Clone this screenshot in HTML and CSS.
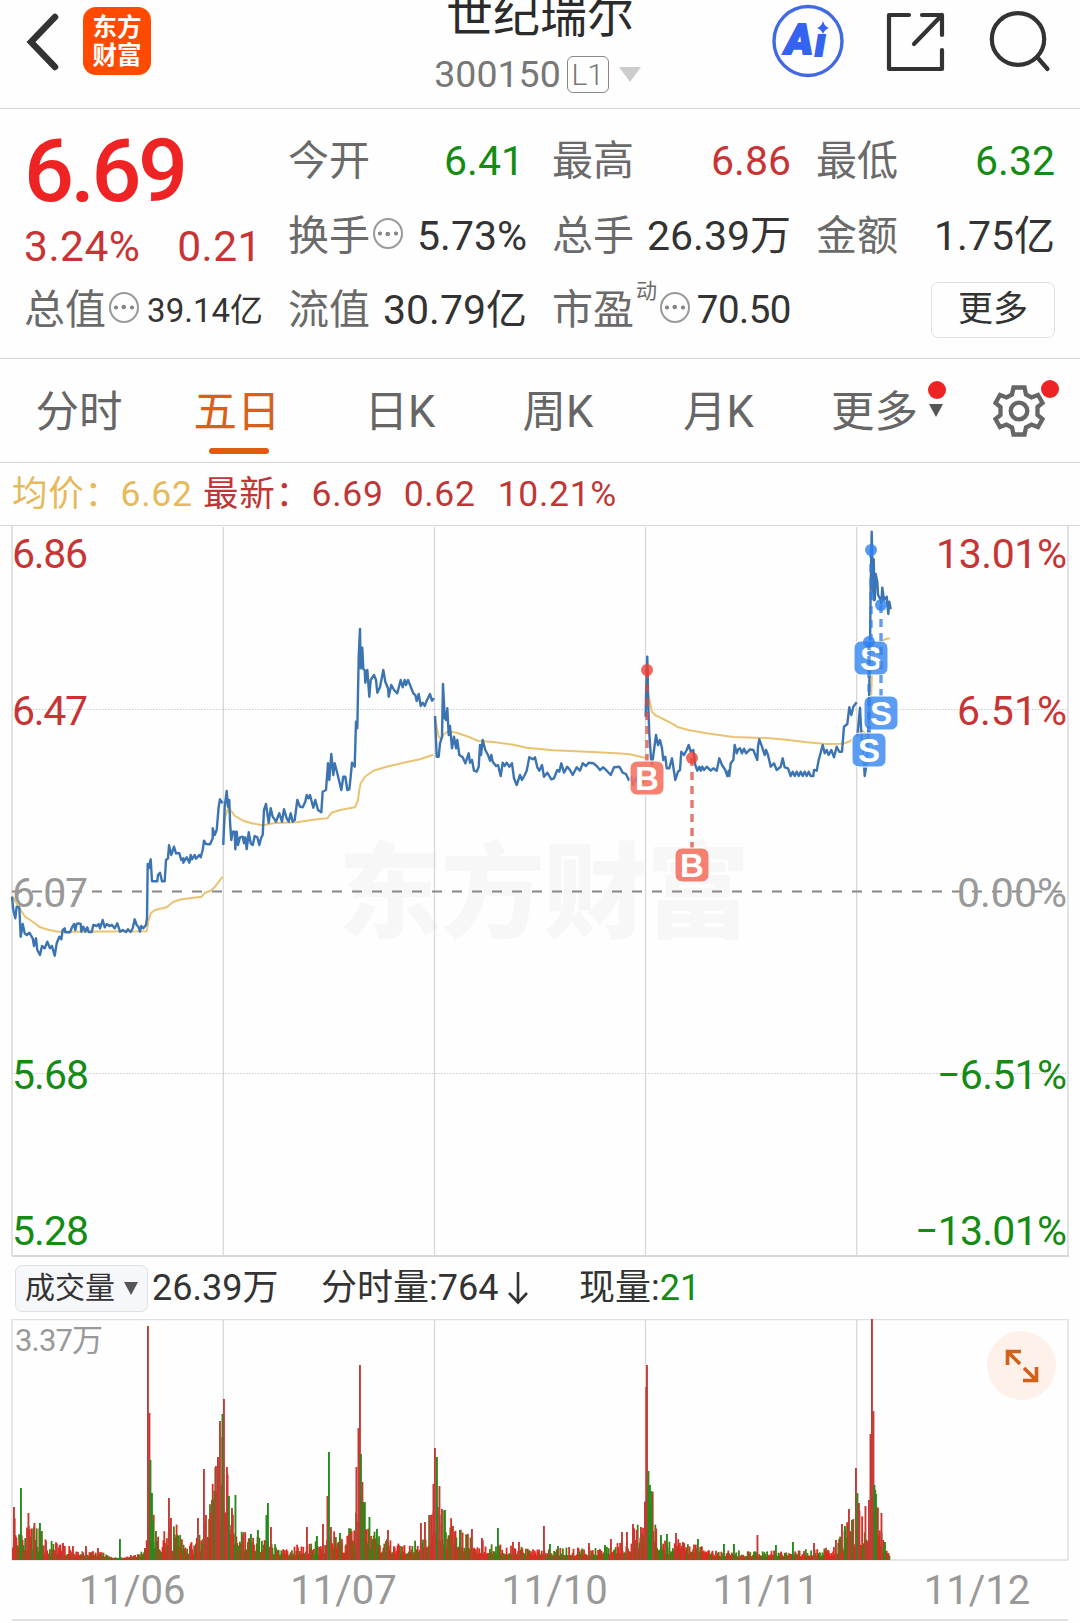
FILE: index.html
```html
<!DOCTYPE html>
<html lang="zh-CN">
<head>
<meta charset="utf-8">
<title>世纪瑞尔 300150</title>
<link rel="stylesheet" href="styles.css">
</head>
<body>
<header class="topbar">
  <div class="topbar-left">
    <svg class="back" width="36" height="60" viewBox="0 0 36 60"><path d="M29 5 5 30 29 55" fill="none" stroke="#333" stroke-width="6.5" stroke-linecap="round"/></svg>
    <div class="app-logo"><span>东方</span><span>财富</span></div>
  </div>
  <div class="stock">
    <h1 class="stock-name">世纪瑞尔</h1>
    <div class="stock-code"><span>300150</span><span class="level">L1</span><svg width="22" height="15" viewBox="0 0 22 15"><path d="M0 0H22L11 15Z" fill="#ccc"/></svg></div>
  </div>
  <div class="topbar-right">
    <svg width="72" height="76" viewBox="0 0 72 76">
      <ellipse cx="36" cy="38" rx="34" ry="34.5" fill="none" stroke="#4169e1" stroke-width="3.4"/>
      <text x="13" y="51" class="ai" textLength="28" lengthAdjust="spacingAndGlyphs">A</text><text x="43" y="53" class="ai ai-i">ı</text>
      <path d="M51 18Q52.5 23.500 57 25Q52.5 26.500 51 31Q49.500 26.500 45 25Q49.500 23.500 51 18Z" fill="#3562f0"/>
    </svg>
    <svg width="60" height="60" viewBox="0 0 60 60" fill="none" stroke="#333" stroke-width="4.200" stroke-linecap="round" stroke-linejoin="round"><path d="M23 3H3V57H56V38M36 3H56V23M28 32 56 3"/></svg>
    <svg width="62" height="62" viewBox="0 0 62 62" fill="none" stroke="#333" stroke-width="4.200" stroke-linecap="round"><ellipse cx="29" cy="29" rx="26.200" ry="25.800"/><path d="M48 47 58.500 59"/></svg>
  </div>
</header>

<section class="quote">
  <div class="price-col">
    <div class="last">6.69</div>
    <div class="change"><span>3.24%</span><span>0.21</span></div>
    <div class="stat stat-total"><label>总值</label><i class="more-dot"></i><b class="small">39.14亿</b></div>
  </div>
  <div class="stat"><label>今开</label><b class="down open">6.41</b></div>
  <div class="stat"><label>最高</label><b class="up">6.86</b></div>
  <div class="stat"><label>最低</label><b class="down">6.32</b></div>
  <div class="stat"><label>换手</label><i class="more-dot"></i><b>5.73%</b></div>
  <div class="stat"><label>总手</label><b>26.39万</b></div>
  <div class="stat"><label>金额</label><b>1.75亿</b></div>
  <div class="stat"><label>流值</label><b>30.79亿</b></div>
  <div class="stat"><label>市盈</label><sup>动</sup><i class="more-dot"></i><b class="mid">70.50</b></div>
  <div class="stat stat-end"><span class="more-btn">更多</span></div>
</section>

<nav class="tabs">
  <span class="tab">分时</span>
  <span class="tab active">五日</span>
  <span class="tab">日K</span>
  <span class="tab">周K</span>
  <span class="tab">月K</span>
  <span class="tab more">更多<i class="caret"></i><i class="dot"></i></span>
  <span class="tab gear">
    <svg width="52" height="54" viewBox="-26 -27 52 54" fill="none" stroke="#666" stroke-width="4.300"><path d="M-5.500-23.500H5.500L7-16.500L12.500-13.500L19-16L23.500-8L18.500-4V4L23.500 8L19 16L12.500 13.500L7 16.500L5.500 23.500H-5.500L-7 16.500L-12.500 13.500L-19 16L-23.500 8L-18.500 4V-4L-23.500-8L-19-16L-12.500-13.500L-7-16.500Z"/><circle r="8.300"/></svg>
    <i class="dot"></i>
  </span>
</nav>

<div class="legend">
  <span class="avg">均价：6.62</span><span>最新：6.69</span><span class="diff">0.62</span><span class="pct">10.21%</span>
</div>

<svg class="price-chart" width="1080" height="731" viewBox="0 526 1080 731">
  <text class="watermark" x="338" y="930" textLength="412">东方财富</text>
  <g stroke="#d8d8d8" stroke-width="1.300">
    <path d="M223.300 527V1256M434.500 527V1256M645.500 527V1256M856.700 527V1256"/>
    <path d="M12 526V1256M1068 526V1256" stroke="#e2e2e2" stroke-width="2"/>
    <path d="M12 1256H1069" stroke-width="2"/>
    <path d="M12 709.500H1068M12 1073.500H1068" stroke-dasharray="1.500 1.500" stroke-width="1" stroke="#ccc"/>
  </g>
  <path d="M12 891.500H1068" stroke="#888" stroke-width="2" stroke-dasharray="10 10"/>
  <g class="axis">
    <text class="up" x="12" y="568" textLength="76">6.86</text>
    <text class="up" x="12" y="725" textLength="76">6.47</text>
    <text class="flat" x="12" y="907" textLength="76">6.07</text>
    <text class="down" x="12" y="1089" textLength="77">5.68</text>
    <text class="down" x="12" y="1245" textLength="77">5.28</text>
    <text class="up" x="936" y="568" textLength="131">13.01%</text>
    <text class="up" x="957" y="725" textLength="110">6.51%</text>
    <text class="flat" x="957" y="907" textLength="110">0.00%</text>
    <text class="down" x="937" y="1089" textLength="130">−6.51%</text>
    <text class="down" x="915" y="1245" textLength="152">−13.01%</text>
  </g>
  <g id="avg-lines" class="avg-line"></g>
  <g id="price-lines" class="price-line"></g>
  <g id="trades"></g>
</svg>

<div class="vol-bar">
  <span class="vol-btn">成交量<i class="caret"></i></span>
  <span class="vol-total">26.39万</span>
  <span class="vol-minute">分时量:764<svg width="20" height="34" viewBox="0 0 20 34" fill="none" stroke="#333" stroke-width="2.600"><path d="M10 1V31M1 22 10 31.500 19 22"/></svg></span>
  <span>现量:<em>21</em></span>
</div>

<div class="vol-wrap">
  <svg width="1080" height="243" viewBox="0 1319 1080 243">
    <path d="M223.300 1319V1560M434.500 1319V1560M645.500 1319V1560M856.700 1319V1560" stroke="#d8d8d8" stroke-width="1.300"/>
    <path d="M12 1319.500H1068V1560H12Z" fill="none" stroke="#e0e0e0" stroke-width="1.500"/>
    <text class="vol-max" x="15" y="1351" textLength="88">3.37万</text>
    <g id="volume"></g>
  </svg>
  <span class="expand"><svg width="34" height="34" viewBox="0 0 34 34" fill="none" stroke="#d2601a" stroke-width="3.600"><path d="M2.500 16V2.500H16M3 3 15 15M31.500 18V31.500H18M31 31 19 19"/></svg></span>
</div>
<div class="dates"><span>11/06</span><span>11/07</span><span>11/10</span><span>11/11</span><span>11/12</span></div>
<script src="chart.js"></script>
</body>
</html>
```
FILE: styles.css
```css
* { box-sizing: border-box; }
body {
  margin: 0;
  width: 1080px;
  height: 1623px;
  overflow: hidden;
  background: #fefefe;
  color: #333;
  font-family: Roboto, "Noto Sans CJK SC", sans-serif;
  line-height: 1;
}
svg { display: block; flex: none; }
i, em { font-style: normal; }

.topbar {
  height: 109px;
  border-bottom: 1.500px solid #d6d6d6;
  display: grid;
  grid-template-columns: 380px 1fr 380px;
}
.topbar-left { display: flex; align-items: flex-start; padding: 7px 0 0 26px; }
.back { margin-top: 5px; }
.app-logo {
  margin-left: 21px;
  width: 68px;
  height: 68px;
  border-radius: 13px;
  background: #ff4a00;
  color: #fff;
  font-size: 24.500px;
  font-weight: 700;
  display: flex;
  flex-direction: column;
  align-items: center;
  justify-content: center;
  gap: 4px;
  padding-top: 2px;
}
.stock { display: flex; flex-direction: column; align-items: center; }
.stock-name { margin: -8px 0 0; font-size: 47px; font-weight: 400; height: 47px; color: #2b2b2b; }
.stock-code {
  display: flex;
  align-items: center;
  margin-top: 17px;
  margin-right: 5px;
  font-size: 37.500px;
  color: #777;
}
.level {
  margin: 0 10px 0 6px;
  width: 42px;
  height: 37px;
  border: 1.500px solid #888;
  border-radius: 6px;
  font-size: 30px;
  font-weight: 300;
  line-height: 35px;
  text-align: center;
}
.topbar-right { display: flex; padding-top: 3px; }
.topbar-right svg:nth-child(1) { margin-left: 72px; }
.topbar-right svg:nth-child(2) { margin: 9px 0 0 42px; }
.topbar-right svg:nth-child(3) { margin: 7px 0 0 43px; }
.ai { font: italic 900 42px Roboto, sans-serif; fill: #3562f0; stroke: #3562f0; stroke-width: 2px; }
.ai-i { font-size: 38px; }

.quote {
  height: 249px;
  padding: 15px 24px 12px;
  display: grid;
  grid-template-columns: repeat(4, 239px);
  grid-template-rows: 75px 75px 72px;
  column-gap: 25px;
}
.price-col { grid-row: 1 / 4; display: grid; grid-template-rows: 92px 58px 72px; }
.last { font-size: 88px; font-weight: 500; letter-spacing: -3.500px; color: #ee2424; line-height: 94px; }
.change { display: flex; justify-content: space-between; padding-right: 1px; font-size: 42.500px; letter-spacing: .5px; color: #c83434; line-height: 61px; }
.stat { display: flex; align-items: center; font-size: 41px; }
.stat label { color: #6a6a6a; white-space: nowrap; }
.stat b { font-weight: 400; margin-left: auto; white-space: nowrap; }
.stat b.small { font-size: 33px; }
.stat b.mid { font-size: 38.500px; letter-spacing: -.5px; }
.stat b.open { padding-right: 3px; }
.stat sup { font-size: 21px; color: #6a6a6a; align-self: flex-start; margin: 7px 0 0 2px; }
.more-dot {
  width: 30px;
  height: 31px;
  margin: -6px 0 0 3px;
  border: 2px solid #999;
  border-radius: 50%;
  background: radial-gradient(circle, #888 2px, transparent 2.600px) center / 7.500px 26px no-repeat,
    radial-gradient(circle at 5px 50%, #888 1.700px, transparent 2.400px),
    radial-gradient(circle at 21px 50%, #888 1.700px, transparent 2.400px);
}
.stat-end { justify-content: flex-end; }
.more-btn {
  width: 124px;
  height: 56px;
  border: 1.500px solid #e0e0e0;
  border-radius: 7px;
  font-size: 35px;
  line-height: 53px;
  text-align: center;
}
.up { color: #c83434; fill: #c83434; }
.down { color: #148c14; fill: #148c14; }
.flat { fill: #999; }

.tabs {
  height: 105px;
  border-top: 1.500px solid #d6d6d6;
  border-bottom: 1.500px solid #d6d6d6;
  display: grid;
  grid-template-columns: 158px 158px 168px 148px 173px 139px 136px;
}
.tab { position: relative; display: flex; align-items: center; justify-content: center; padding-top: 5px; font-size: 43.500px; color: #666; }
.tab.active { color: #d9601a; }
.tab.active::after {
  content: "";
  position: absolute;
  left: 51px;
  bottom: 8px;
  width: 60px;
  height: 6px;
  border-radius: 3px;
  background: #df5a12;
}
.gear { padding: 0 0 0 13px; }
.dot { position: absolute; width: 18px; height: 18px; border-radius: 50%; background: #ee2424; }
.more .dot { left: 123px; top: 22px; }
.gear .dot { left: 97px; top: 21px; }
.caret { border: 7.500px solid transparent; border-top: 13px solid #555; border-bottom: 0; }
.more .caret { position: absolute; left: 124px; top: 45px; }

.legend { height: 63px; border-bottom: 1.500px solid #d6d6d6; padding: 2px 0 0 12px; display: flex; align-items: center; font-size: 35.500px; color: #c03634; white-space: nowrap; letter-spacing: .7px; }
.legend .avg { color: #e6b95a; width: 191px; }
.legend .diff { margin-left: 20px; }
.legend .pct { margin-left: 22px; }

.watermark { font-family: "Noto Sans CJK SC", sans-serif; font-size: 104px; font-weight: 900; fill: #f7f7f7; }
.axis { font-size: 41px; }
.axis .flat { fill: #999; }
.price-line { fill: none; stroke: #3b74b0; stroke-width: 2.400; stroke-linejoin: round; }
.avg-line { fill: none; stroke: #e9c372; stroke-width: 2; stroke-linejoin: round; }
.trade-label { font: 700 33px "Liberation Sans", sans-serif; fill: #fff; text-anchor: middle; }

.vol-bar { height: 62px; display: flex; align-items: center; padding-left: 15px; font-size: 36px; white-space: nowrap; }
.vol-btn {
  width: 133px;
  height: 47px;
  display: flex;
  align-items: center;
  gap: 9px;
  padding-left: 9px;
  border: 1.500px solid #dedfe3;
  border-radius: 7px;
  background: #f6f7fb;
  font-size: 30px;
}
.vol-total { width: 169px; margin-left: 4px; }
.vol-minute { display: flex; align-items: center; gap: 10px; width: 258px; }
.vol-bar em { color: #148c14; }
.vol-wrap { position: relative; height: 243px; }
.vol-max { font-size: 31px; fill: #999; }
.expand { position: absolute; right: 24px; top: 12px; width: 69px; height: 69px; border-radius: 50%; background: #fdf1ea; display: grid; place-items: center; }
.dates { margin: 0 12px; height: 59px; border-bottom: 2px solid #e0e0e0; display: grid; grid-template-columns: repeat(5, 211.200px); padding-left: 67px; font-size: 40px; line-height: 58px; color: #999; }
```
FILE: chart.js
```js
// Intraday samples per trading day, in thirds of a pixel from each day's origin.
const days = [
  { x: 0, y: 620,
    price: "36,830 40,870 46,895 50,860 58,862 60,905 62,950 68,912 74,940 80,945 88,938 98,955 102,978 108,955 112,990 120,1005 126,978 134,985 142,965 150,985 156,978 164,1007 170,970 178,950 184,958 188,930 194,925 196,937 210,937 216,922 222,912 226,930 230,912 236,910 242,912 244,935 250,920 256,935 262,922 266,936 275,936 280,915 290,918 296,912 300,925 308,900 314,922 320,912 328,918 336,915 344,925 352,910 360,935 368,930 378,936 384,928 392,936 398,925 404,898 410,915 416,922 420,935 424,918 430,925 438,915 441,895 443,732 446,745 452,718 456,784 472,784 474,765 480,758 486,784 494,784 498,720 504,715 507,676 514,705 522,680 528,700 538,700 544,720 550,715 550,728 560,712 568,728 572,705 576,718 584,705 588,716 598,705 602,712 608,690 612,662 618,672 630,673 638,655 638,625 644,645 650,630 656,560 660,538 668,550",
    avg: "36,830 50,850 62,870 75,890 95,903 120,922 145,929 175,935 440,934 446,900 452,880 465,870 500,862 520,845 545,838 605,830 615,818 632,812 645,800 668,770" },
  { x: 220, y: 600,
    price: "10,735 14,620 20,573 24,620 28,600 30,665 34,720 38,695 44,695 46,748 50,695 54,735 60,712 68,710 72,730 76,712 80,747 86,697 92,730 98,735 104,708 112,712 118,735 124,712 128,705 132,630 138,612 142,640 146,668 152,625 158,650 168,665 178,640 186,665 192,628 200,655 206,665 212,640 218,665 224,660 232,600 240,620 248,622 256,605 260,585 266,595 270,585 280,623 286,600 294,630 304,637 308,575 318,570 324,490 328,540 334,462 340,525 344,490 352,520 364,570 370,530 376,530 382,570 388,568 392,530 396,488 404,500 408,365 412,385 416,170 420,87 422,205 427,143 430,208 434,210 436,248 442,210 448,290 452,240 462,225 468,240 472,278 480,262 490,210 496,245 504,265 506,290 514,255 522,270 532,280 542,240 548,262 554,240 558,255 564,240 574,265 580,280 586,285 590,303 596,282 602,318 608,308 614,318 620,302 630,282 636,302 642,295",
    avg: "12,690 16,650 24,625 35,635 45,648 70,662 95,670 128,676 165,669 230,667 290,658 322,655 335,638 360,630 405,622 414,600 418,570 422,550 435,530 460,512 500,500 560,486 600,478 640,464" },
  { x: 420, y: 640,
    price: "45,228 50,350 56,350 60,310 66,290 69,132 74,235 78,240 82,205 86,285 90,258 96,325 102,290 108,325 112,300 118,345 128,352 136,370 146,340 150,368 156,360 162,392 170,395 176,380 180,315 183,345 188,300 196,330 204,345 210,362 214,345 218,365 228,378 234,375 242,408 248,368 254,378 260,368 268,380 276,370 282,415 290,435 300,405 306,420 314,405 320,392 328,352 338,358 345,352 352,382 358,392 366,375 372,410 382,398 394,418 402,415 412,390 418,395 424,370 432,398 442,380 450,390 458,405 470,382 480,392 488,370 498,378 506,368 520,370 530,378 540,390 550,382 560,392 572,405 582,382 598,380 608,398 618,402 626,420 634,412 640,435 648,415 656,432 664,415 672,430",
    avg: "45,228 50,262 56,290 63,298 72,282 85,274 110,278 145,290 175,303 220,306 280,314 320,323 400,331 500,335 590,340 630,343 676,354" },
  { x: 640, y: 520,
    price: "17,590 19,500 22,410 25,560 28,640 33,715 36,735 42,690 48,645 54,675 60,660 66,685 70,720 76,710 80,745 88,745 96,715 106,780 114,755 120,750 124,695 132,705 140,690 146,675 152,695 160,690 166,735 172,752 178,740 182,752 187,740 192,750 200,740 212,752 220,745 230,752 238,715 246,735 256,750 262,768 266,752 268,768 272,730 280,720 284,675 290,700 295,688 300,685 306,700 312,686 318,700 330,688 340,690 352,720 354,680 358,658 366,680 374,705 378,690 384,705 392,740 402,730 410,750 422,740 428,715 434,742 444,745 452,768 458,755 464,768 470,755 476,768 482,755 488,768 494,755 500,768 506,755 512,768 520,768 522,750 530,752 536,720 548,675 554,700 560,690 566,705 574,690 582,712 590,680 598,695 606,695 612,620 622,612 628,562 634,585 640,560 650,547",
    avg: "20,500 28,540 36,575 45,585 60,592 75,600 95,610 115,622 145,630 200,640 280,651 380,654 440,659 500,667 560,672 610,671 630,664 636,658" },
  { x: 640, y: 520,
    price: "652,650 660,563 664,640 670,700 674,768 680,730 686,600 690,380 692,200 695,35 698,180 701,240 701,118 704,240 707,162 712,185 714,225 720,235 724,250 727,203 732,240 740,230 745,282 748,245 752,268",
    avg: "652,640 665,630 675,640 684,680 690,640 694,520 696,460 700,400 710,378 725,365 735,358 750,355" }
];
const line = (d, pts) => `<polyline points="${pts.split(" ").map(p => {
  const [a, b] = p.split(",");
  return (d.x + a / 3).toFixed(1) + "," + (d.y + b / 3).toFixed(1);
}).join(" ")}"/>`;
document.getElementById("price-lines").innerHTML = days.map(d => line(d, d.price)).join("");
document.getElementById("avg-lines").innerHTML = days.map(d => line(d, d.avg)).join("");

// Buy and sell marks: letter, x, price y, label y.
const trades = [["B", 647, 670, 778], ["B", 692, 758, 865], ["S", 871, 550, 658], ["S", 881, 605, 713], ["S", 869, 642, 750]];
document.getElementById("trades").innerHTML = trades.map(([t, x, y, ly]) => {
  const line = t === "B" ? "#dc4a42" : "#2f7de6", box = t === "B" ? "#f4705f" : "#4590f2";
  return `<path d="M${x} ${y}V${ly - 17}" stroke="${line}" stroke-opacity=".75" stroke-width="3.4" stroke-dasharray="8 6"/>
    <circle cx="${x}" cy="${y}" r="6" fill="${t === "B" ? "#ee4034" : "#2f7fee"}" fill-opacity=".8"/>
    <rect x="${x - 17}" y="${ly - 17}" width="34" height="34" rx="7" fill="${box}" fill-opacity=".88" stroke="#fff"/>
    <text class="trade-label" x="${x}" y="${ly + 11.5}">${t}</text>`;
}).join("");

// Volume: background level by x, then the individual peaks.
const level = [[12,50],[20,42],[30,32],[40,32],[48,18],[62,16],[75,9],[100,8],[112,1],[122,1],[143,9],[150,65],[156,26],[175,36],[185,13],[195,20],[205,38],[213,90],[222,140],[228,75],[238,34],[250,26],[262,22],[275,14],[290,9],[300,18],[320,18],[330,34],[345,24],[354,60],[364,70],[368,36],[380,20],[400,18],[420,26],[432,52],[440,76],[446,44],[460,32],[475,22],[500,14],[540,10],[570,12],[590,11],[620,18],[640,40],[646,75],[652,70],[660,20],[675,20],[690,18],[710,8],[780,8],[835,12],[845,36],[856,52],[866,42],[875,85],[880,36],[888,14],[891,6]];
const peaks = [[14,53],[21,72,1],[28.500,47],[34.500,37],[40,37,1],[46,19],[56,17],[63,17],[73,14],[86,14],[98,12],[120,21,1],[148,234],[149.500,147],[150.500,100,1],[152,67,1],[153,39,1],[156,29,1],[169,62],[171,42],[174,25,1],[190,14],[198,42],[204,91],[206,45],[212,60],[216,94],[218,103],[220,139],[222.500,146,1],[224,161],[227,93],[229,64,1],[232,52],[235.500,65,1],[243,25],[251,26,1],[258,30,1],[266.500,45,1],[268,57,1],[271,33],[307,33],[317,24,1],[323,36],[327.500,64],[329,108,1],[331,33],[340,27,1],[349,26],[356.500,93],[358.500,132],[360,195],[361,106,1],[362.500,78],[363.500,58,1],[369.500,43,1],[377,31,1],[388,30],[421,37],[425,38],[430,45],[433.500,76],[435,112],[437,103,1],[439.500,74],[442,51],[445,50,1],[453,34],[460,30,1],[472,31],[482,22],[498,32,1],[513,18],[519,18],[544,34],[550,16,1],[558,14,1],[589,17],[605,15,1],[611,21],[622,28],[627,28],[633,36],[637,30],[641,33],[645,58],[647,195],[646.300,173],[648.500,89,1],[650,75,1],[651.500,69,1],[653,27],[661,25,1],[667,26,1],[676,27],[683,18],[698,21,1],[724,16,1],[734,16,1],[757.500,25],[776,15,1],[793,18,1],[814,17],[836,20],[842,36],[845,34,1],[849,51],[852,40,1],[856,92],[857.500,67,1],[859,57],[865.500,54],[869,60],[870.500,126],[872,241],[873.500,149],[874.500,75,1],[876,66,1],[881.500,47],[885,18,1]];
let seed = 11;
const rnd = () => (seed = (seed * 16807) % 2147483647) / 2147483647;
const bar = (x, h, c, w) => `<rect x="${x.toFixed(1)}" y="${(1560 - h).toFixed(1)}" width="${w}" height="${h.toFixed(1)}" fill="${c}"/>`;
let out = "";
for (let x = 12, i = 0; x < 889; x += .88) {
  while (level[i + 1][0] < x) i++;
  const [x0, a] = level[i], [x1, b] = level[i + 1];
  const h = 1.500 + (a + (b - a) * (x - x0) / (x1 - x0)) * (.22 + .78 * Math.pow(rnd(), 1.600));
  out += bar(x, h, rnd() < .6 ? "#dc2c22" : "#3f8012", 1.800);
}
out += peaks.map(([x, h, g]) => bar(x - 1, h, g ? "#248c1c" : "#c43a34", 1.900)).join("");
document.getElementById("volume").innerHTML = out;
```
